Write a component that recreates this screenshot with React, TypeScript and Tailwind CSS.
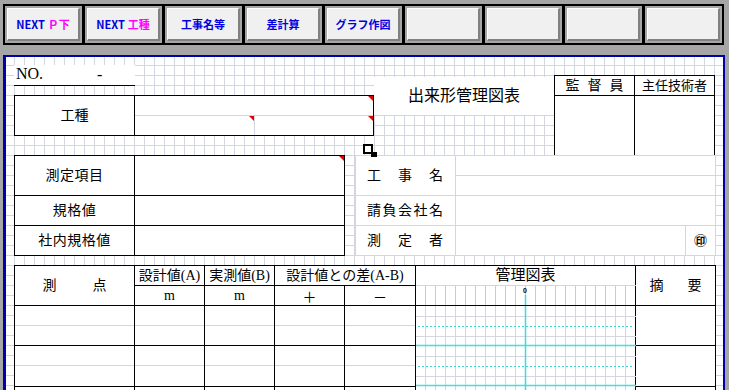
import React from 'react';

const LINE = '#d3d6df';

const buttons: { a?: string; b?: string }[] = [
  { a: 'NEXT', b: 'Ｐ下' },
  { a: 'NEXT', b: '工種' },
  { b: '工事名等' },
  { b: '差計算' },
  { b: 'グラフ作図' },
  {},
  {},
  {},
  {},
];

function Tri() {
  return (
    <span className="absolute right-0 top-0 h-0 w-0 border-l-[5px] border-t-[5px] border-l-transparent border-t-[#e00000]" />
  );
}

function ToolButton({ a, b, first }: { a?: string; b?: string; first: boolean }) {
  return (
    <div className={`h-[41px] w-[81px] border-2 border-black p-[2px] ${first ? '' : '-ml-px'}`}>
      <div className="flex h-full items-center justify-center gap-[3px] border-l border-t border-white border-b-2 border-r-2 border-b-[#808080] border-r-[#808080] bg-[#f0f0f0] font-['Liberation_Sans_Narrow','Noto_Sans_CJK_JP',sans-serif] font-bold leading-none">
        {a && <span className="text-[11px] text-[#0000e0]">{a}</span>}
        {b && <span className={`text-[11px] ${a ? 'text-[#ff00ff]' : 'text-[#0000e0]'}`}>{b}</span>}
      </div>
    </div>
  );
}

function GraphHeader() {
  const xs = Array.from({ length: 21 }, (_, i) => 9.5 + i * 10);
  return (
    <svg width="220" height="19" viewBox="0 0 220 19" className="block">
      {xs.map((x) => (
        <line key={x} x1={x} y1={0} x2={x} y2={19} stroke="#c9ccd6" strokeWidth={1} />
      ))}
      <line x1={109.5} y1={9} x2={109.5} y2={19} stroke="#38dcdc" strokeWidth={1.5} />
      <text x={107} y={7} fontSize={7} fontWeight={700} fontFamily="Liberation Sans, sans-serif" fill="#000">
        0
      </text>
    </svg>
  );
}

function GraphBody() {
  const xs = Array.from({ length: 21 }, (_, i) => 9.5 + i * 10);
  const rows = [0, 40, 80];
  return (
    <svg width="220" height="120" viewBox="0 0 220 120" className="block">
      {rows.map((r) => (
        <g key={r}>
          <line x1={0} y1={r + 10.5} x2={220} y2={r + 10.5} stroke={LINE} />
          <line x1={0} y1={r + 30.5} x2={220} y2={r + 30.5} stroke={LINE} />
        </g>
      ))}
      {xs.map((x) => (
        <line key={x} x1={x} y1={0} x2={x} y2={120} stroke="#a9e9ec" strokeWidth={1} />
      ))}
      {rows.map((r) => (
        <g key={'c' + r}>
          <line x1={2} y1={r + 20.5} x2={218} y2={r + 20.5} stroke="#3ed6d6" strokeDasharray="2 2" />
          <line x1={0} y1={r + 39.5} x2={220} y2={r + 39.5} stroke="#40e0e0" strokeWidth={1.5} />
        </g>
      ))}
      <line x1={109.5} y1={0} x2={109.5} y2={120} stroke="#38dcdc" strokeWidth={1.5} />
    </svg>
  );
}

function DataCell() {
  return (
    <td className="border border-black p-0 align-top">
      <div className="h-[20px] border-b border-[#d3d6df]" />
    </td>
  );
}

export default function App() {
  return (
    <div className="h-[390px] w-[729px] overflow-hidden bg-[#a6a6a6]">
      {/* toolbar */}
      <div className="flex h-[55px] pl-[3px] pt-[4px]">
        {buttons.map((bt, i) => (
          <ToolButton key={i} a={bt.a} b={bt.b} first={i === 0} />
        ))}
      </div>

      {/* sheet */}
      <div className="relative ml-[3px] mr-[4px] h-[340px] border-l-[3px] border-r-[2px] border-t-2 border-[#0000aa] bg-white pl-[8px] font-['Liberation_Serif','Noto_Sans_CJK_JP',serif] text-[14px] leading-none text-black [background-image:linear-gradient(to_right,#d3d6df_1px,transparent_1px),linear-gradient(to_bottom,#d3d6df_1px,transparent_1px)] [background-position:8px_8px] [background-size:10px_10px]">
        {/* top section */}
        <div className="flex h-[98px] items-start">
          <div className="w-[360px]">
            <div className="relative mt-[8px] h-[21px] w-[121px] border-b border-black bg-white">
              <span className="absolute bottom-[3px] left-[2px] text-[16px]">NO.</span>
              <span className="absolute left-[83px] top-[2px] text-[16px]">-</span>
            </div>
            <div className="mt-[9px] flex h-[41px] w-[360px] border border-black bg-white">
              <div className="flex w-[120px] items-center justify-center border-r border-black">工種</div>
              <div className="flex flex-1 flex-col">
                <div className="relative h-[20px] border-b border-[#d3d6df]">
                  <Tri />
                </div>
                <div className="flex flex-1">
                  <div className="relative w-[120px] border-r border-[#d3d6df]">
                    <Tri />
                  </div>
                  <div className="relative flex-1">
                    <Tri />
                  </div>
                </div>
              </div>
            </div>
          </div>

          <div className="mt-[20px] flex h-[38px] w-[180px] items-center justify-center bg-white text-[16px]">
            出来形管理図表
          </div>

          <div className="mt-[18px] flex h-[81px] w-[161px] flex-col border border-black bg-white">
            <div className="flex h-[20px] border-b border-black">
              <div className="flex w-[80px] items-center justify-center border-r border-black">
                <span className="flex w-[58px] justify-between">
                  <span>監</span>
                  <span>督</span>
                  <span>員</span>
                </span>
              </div>
              <div className="flex flex-1 items-center justify-center text-[13px]">主任技術者</div>
            </div>
            <div className="flex flex-1">
              <div className="w-[80px] border-r border-black" />
              <div className="flex-1" />
            </div>
          </div>
        </div>

        {/* selection marker */}
        <div className="absolute left-[357px] top-[87px] h-[10px] w-[10px] border-2 border-black bg-white" />
        <div className="absolute left-[365px] top-[95px] h-[5px] w-[6px] bg-black" />

        {/* middle section */}
        <div className="flex h-[101px] items-start">
          <div className="flex h-[101px] w-[331px] flex-col border border-black bg-white">
            <div className="flex h-[40px] border-b border-black">
              <div className="flex w-[120px] items-center justify-center border-r border-black tracking-[0.5px]">測定項目</div>
              <div className="relative flex-1">
                <Tri />
              </div>
            </div>
            <div className="flex h-[30px] border-b border-black">
              <div className="flex w-[120px] items-center justify-center border-r border-black tracking-[0.5px]">規格値</div>
              <div className="flex-1" />
            </div>
            <div className="flex flex-1">
              <div className="flex w-[120px] items-center justify-center border-r border-black tracking-[0.5px]">社内規格値</div>
              <div className="flex-1" />
            </div>
          </div>

          <div className="ml-[10px] flex h-[101px] w-[361px] flex-col border border-[#d3d6df] bg-white">
            <div className="flex h-[40px] border-b border-[#d3d6df]">
              <div className="flex w-[100px] items-center border-r border-[#d3d6df] pl-[11px]">
                <span className="flex w-[76px] justify-between">
                  <span>工</span>
                  <span>事</span>
                  <span>名</span>
                </span>
              </div>
              <div className="flex flex-1 flex-col">
                <div className="h-[20px] border-b border-[#d3d6df]" />
              </div>
            </div>
            <div className="flex h-[30px] border-b border-[#d3d6df]">
              <div className="flex w-[100px] items-center border-r border-[#d3d6df] pl-[11px]">
                <span className="flex w-[76px] justify-between">
                  <span>請</span>
                  <span>負</span>
                  <span>会</span>
                  <span>社</span>
                  <span>名</span>
                </span>
              </div>
              <div className="flex-1" />
            </div>
            <div className="flex flex-1">
              <div className="flex w-[100px] items-center border-r border-[#d3d6df] pl-[11px]">
                <span className="flex w-[76px] justify-between">
                  <span>測</span>
                  <span>定</span>
                  <span>者</span>
                </span>
              </div>
              <div className="flex-1" />
              <div className="flex w-[30px] items-center justify-center border-l border-[#d3d6df] text-[13px] font-bold">㊞</div>
            </div>
          </div>
        </div>

        {/* main table */}
        <table className="mt-[9px] w-[701px] table-fixed border-collapse bg-white">
          <colgroup>
            <col className="w-[120px]" />
            <col className="w-[70px]" />
            <col className="w-[70px]" />
            <col className="w-[70px]" />
            <col className="w-[71px]" />
            <col className="w-[220px]" />
            <col className="w-[80px]" />
          </colgroup>
          <tbody>
            <tr className="h-[20px]">
              <td rowSpan={2} className="border border-black p-0 text-center">
                <span className="inline-flex w-[64px] justify-between">
                  <span>測</span>
                  <span>点</span>
                </span>
              </td>
              <td className="border border-black p-0 text-center">設計値(A)</td>
              <td className="border border-black p-0 text-center">実測値(B)</td>
              <td colSpan={2} className="border border-black p-0 text-center">設計値との差(A-B)</td>
              <td className="border border-black border-b-[#d3d6df] p-0 text-center text-[15px]">管理図表</td>
              <td rowSpan={2} className="border border-black p-0 text-center">
                <span className="inline-flex w-[52px] justify-between">
                  <span>摘</span>
                  <span>要</span>
                </span>
              </td>
            </tr>
            <tr className="h-[20px]">
              <td className="border border-black p-0 text-center">m</td>
              <td className="border border-black p-0 text-center">m</td>
              <td className="border border-black p-0 text-center font-['Noto_Sans_CJK_JP',sans-serif]">＋</td>
              <td className="border border-black p-0 text-center font-['Noto_Sans_CJK_JP',sans-serif]">－</td>
              <td className="border border-black border-t-[#d3d6df] p-0 align-top">
                <GraphHeader />
              </td>
            </tr>
            {[0, 1, 2].map((r) => (
              <tr key={r} className="h-[40px]">
                <DataCell />
                <DataCell />
                <DataCell />
                <DataCell />
                <DataCell />
                {r === 0 && (
                  <td rowSpan={3} className="border border-black p-0 align-top">
                    <GraphBody />
                  </td>
                )}
                <td className="border border-black p-0" />
              </tr>
            ))}
          </tbody>
        </table>
      </div>
    </div>
  );
}
